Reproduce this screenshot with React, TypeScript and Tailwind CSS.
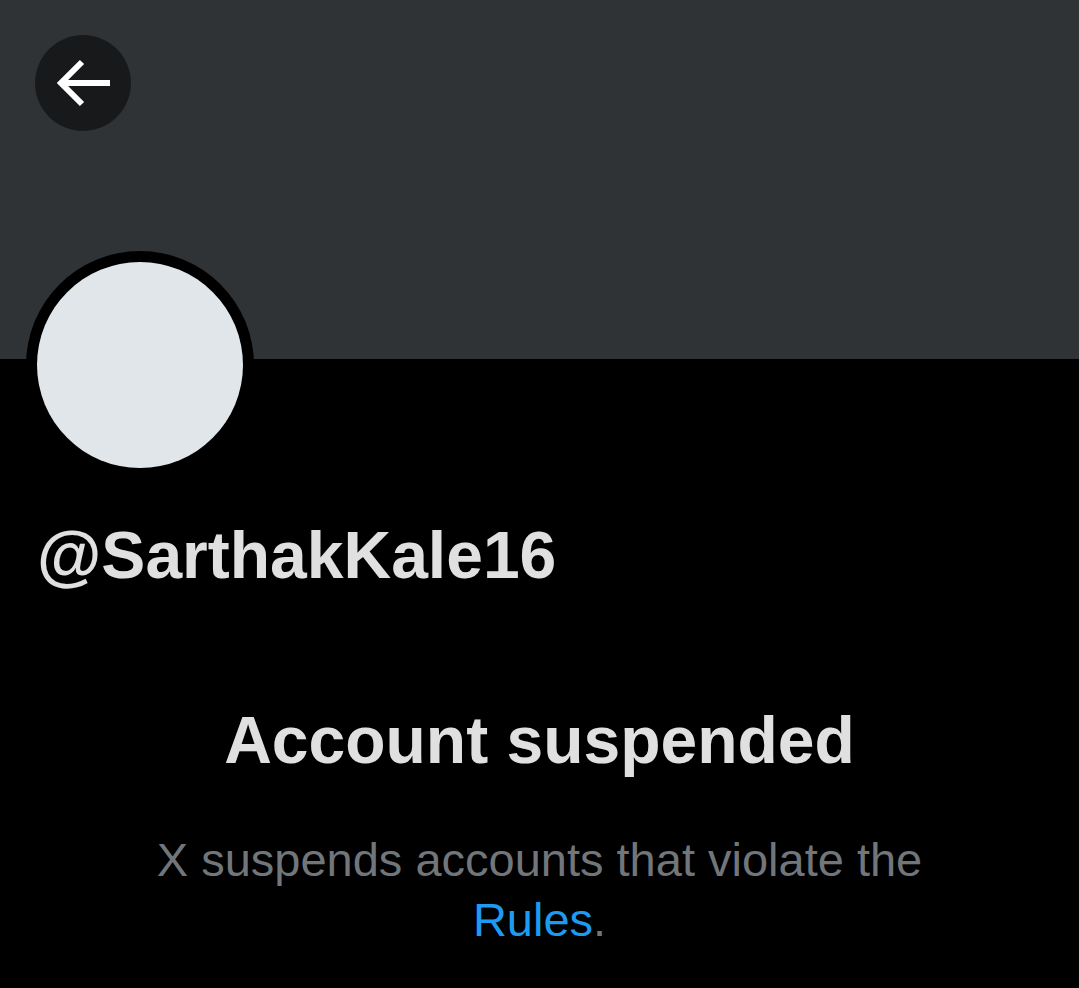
const font = { fontFamily: '"Liberation Sans", Arial, sans-serif' };

function BackArrow() {
  return (
    <svg width="96" height="96" viewBox="0 0 96 96" fill="none">
      <path d="M25 48 H75" stroke="white" strokeWidth="6" />
      <path d="M47 27 L26 48 L47 69" stroke="white" strokeWidth="6" />
    </svg>
  );
}

export default function App() {
  return (
    <div className="w-[1079px] h-[988px] bg-black overflow-hidden" style={font}>
      <div className="h-[359px] bg-[#2f3336] pt-[35px] pl-[35px]">
        <button className="w-24 h-24 rounded-full bg-black/50 flex items-center justify-center">
          <BackArrow />
        </button>
      </div>

      <div className="pl-[26px] -mt-[108px]">
        <div className="w-[228px] h-[228px] rounded-full bg-black p-[11px]">
          <div className="w-full h-full rounded-full bg-[#e1e6ea]" />
        </div>
      </div>

      <div className="pl-[37px] mt-[36px] text-[66px] leading-[80px] font-bold text-[#e0e0e0]">
        @SarthakKale16
      </div>

      <div className="mt-[105px] text-center text-[66px] leading-[80px] font-bold text-[#e0e0e0]">
        Account suspended
      </div>

      <p className="mt-[50px] text-center text-[47px] leading-[60px] text-[#71767b] px-[140px]">
        X suspends accounts that violate the <span className="text-[#1d9bf0]">Rules</span>.
      </p>
    </div>
  );
}
